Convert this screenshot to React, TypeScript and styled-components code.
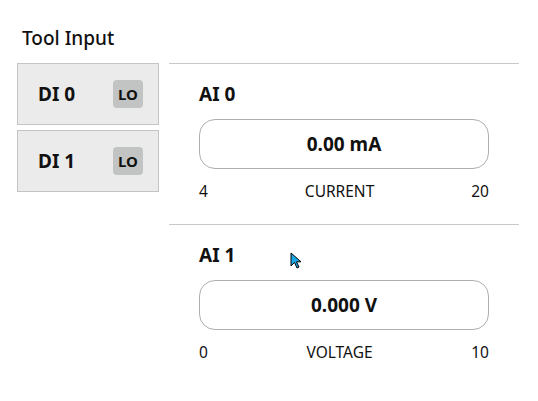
import React from "react";
import styled, { createGlobalStyle } from "styled-components";

const Global = createGlobalStyle`
  html, body { margin: 0; padding: 0; background: #ffffff; }
  body { font-family: "Noto Sans", "Open Sans", sans-serif; color: #111; }
`;

const Page = styled.div`
  position: relative;
  width: 538px;
  height: 401px;
  padding: 25px 0 0 17px;
  box-sizing: border-box;
`;

const Title = styled.div`
  margin-left: 5px;
  font-size: 19px;
  line-height: 26px;
  font-weight: 500;
  height: 38px;
`;

const Row = styled.div`
  display: flex;
  gap: 10px;
  align-items: flex-start;
`;

const LeftCol = styled.div`
  width: 142px;
  display: flex;
  flex-direction: column;
  gap: 5px;
`;

const DigitalBox = styled.div`
  height: 62px;
  box-sizing: border-box;
  background: #eaebea;
  border: 1px solid #c3c4c4;
  display: flex;
  align-items: center;
  justify-content: space-between;
  padding: 0 15px 0 20px;
`;

const DigitalLabel = styled.span`
  font-size: 19px;
  font-weight: 700;
`;

const Badge = styled.span`
  width: 30px;
  height: 28px;
  border-radius: 4px;
  background: #c2c4c4;
  display: flex;
  align-items: center;
  justify-content: center;
  font-size: 15px;
  font-weight: 700;
`;

const RightCol = styled.div`
  width: 350px;
  display: flex;
  flex-direction: column;
`;

const Section = styled.div`
  box-sizing: border-box;
  border-top: 1px solid #c8c8c8;
  padding: 17px 30px 0 30px;
  height: 161px;
`;

const AnalogLabel = styled.div`
  font-size: 19px;
  font-weight: 700;
  line-height: 26px;
  height: 38px;
`;

const Display = styled.div`
  height: 50px;
  box-sizing: border-box;
  border: 1px solid #aeaeae;
  border-radius: 16px;
  display: flex;
  align-items: center;
  justify-content: center;
  font-size: 19px;
  font-weight: 700;
`;

const Scale = styled.div`
  margin-top: 11px;
  display: flex;
  justify-content: space-between;
  font-size: 15.5px;
  line-height: 22px;
`;

const Cursor = styled.svg`
  position: absolute;
  left: 290px;
  top: 252px;
`;

type Analog = { name: string; value: string; min: string; max: string; kind: string };

const analogs: Analog[] = [
  { name: "AI 0", value: "0.00 mA", min: "4", max: "20", kind: "CURRENT" },
  { name: "AI 1", value: "0.000 V", min: "0", max: "10", kind: "VOLTAGE" },
];

export default function App() {
  return (
    <>
      <Global />
      <Page>
        <Title>Tool Input</Title>
        <Row>
          <LeftCol>
            {["DI 0", "DI 1"].map((d) => (
              <DigitalBox key={d}>
                <DigitalLabel>{d}</DigitalLabel>
                <Badge>LO</Badge>
              </DigitalBox>
            ))}
          </LeftCol>
          <RightCol>
            {analogs.map((a) => (
              <Section key={a.name}>
                <AnalogLabel>{a.name}</AnalogLabel>
                <Display>{a.value}</Display>
                <Scale>
                  <span>{a.min}</span>
                  <span>{a.kind}</span>
                  <span>{a.max}</span>
                </Scale>
              </Section>
            ))}
          </RightCol>
        </Row>
        <Cursor width="14" height="18" viewBox="0 0 14 18">
          <path d="M1 1 L1 14 L4.5 10.5 L7 16 L9 15 L6.5 9.8 L11 9.8 Z" fill="#1aa7e8" stroke="#000" strokeWidth="1" />
        </Cursor>
      </Page>
    </>
  );
}
